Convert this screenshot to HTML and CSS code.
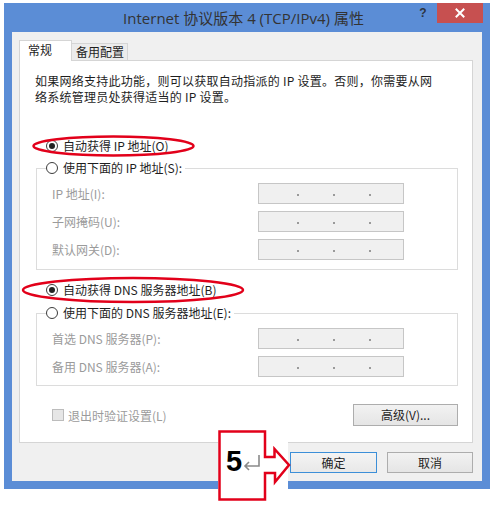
FILE: index.html
```html
<!DOCTYPE html>
<html lang="zh-CN">
<head>
<meta charset="utf-8">
<title>Internet 协议版本 4 (TCP/IPv4) 属性</title>
<link rel="stylesheet" href="styles.css">
</head>
<body>
<div class="stage">
  <div class="window">
    <div class="titlebar">
      <div class="spacer"></div>
      <div class="title">Internet 协议版本 4 (TCP/IPv4) 属性</div>
      <div class="controls">
        <span class="help">?</span>
        <span class="close"><svg width="10" height="10" viewBox="0 0 10 10"><path d="M1.5 1.5 L8.5 8.5 M8.5 1.5 L1.5 8.5" stroke="#fff" stroke-width="2" stroke-linecap="square"/></svg></span>
      </div>
    </div>
    <div class="client">
      <div class="tabs">
        <div class="tab active">常规</div>
        <div class="tab">备用配置</div>
      </div>
      <div class="panel">
        <p class="desc">如果网络支持此功能，则可以获取自动指派的 IP 设置。否则，你需要从网<br>络系统管理员处获得适当的 IP 设置。</p>
        <div class="opt"><span class="radio on"></span>自动获得 IP 地址(O)</div>
        <div class="group g1">
          <div class="opt head"><span class="radio"></span>使用下面的 IP 地址(S):</div>
          <div class="fields">
            <span class="lbl">IP 地址(I):</span>
            <span class="ip"><i></i><i></i><i></i></span>
            <span class="lbl">子网掩码(U):</span>
            <span class="ip"><i></i><i></i><i></i></span>
            <span class="lbl">默认网关(D):</span>
            <span class="ip"><i></i><i></i><i></i></span>
          </div>
        </div>
        <div class="opt o3"><span class="radio on"></span>自动获得 DNS 服务器地址(B)</div>
        <div class="group g2">
          <div class="opt head"><span class="radio"></span>使用下面的 DNS 服务器地址(E):</div>
          <div class="fields">
            <span class="lbl">首选 DNS 服务器(P):</span>
            <span class="ip"><i></i><i></i><i></i></span>
            <span class="lbl">备用 DNS 服务器(A):</span>
            <span class="ip"><i></i><i></i><i></i></span>
          </div>
        </div>
        <div class="bottom">
          <div class="check"><span class="box"></span>退出时验证设置(L)</div>
          <button class="btn adv">高级(V)...</button>
        </div>
      </div>
      <div class="actions">
        <button class="btn ok">确定</button>
        <button class="btn cancel">取消</button>
      </div>
    </div>
  </div>

  <svg class="marks" width="496" height="507" viewBox="0 0 496 507">
    <ellipse cx="113.5" cy="146" rx="80" ry="9.5" fill="none" stroke="#e2001a" stroke-width="2.5"/>
    <ellipse cx="133" cy="290" rx="110" ry="12" fill="none" stroke="#e2001a" stroke-width="2.5"/>
  </svg>

  <div class="callout">
    <svg class="callout-shape" width="76" height="72" viewBox="0 0 76 72">
      <rect x="0" y="0" width="70" height="70" fill="#fff"/>
      <path d="M1.5 1.5 H47 V27 H56.5 V19 L71 35 L57 52 V43 H47 V69.5 H1.5 Z" fill="#fff" stroke="#e2001a" stroke-width="2.5" stroke-linejoin="miter"/>
      <path d="M41 25 V36 H27 M31 32 L27 36 L31 40" fill="none" stroke="#8a8a8a" stroke-width="1.6"/>
    </svg>
    <span class="num">5</span>
  </div>
</div>
</body>
</html>
```

FILE: styles.css
```css
html, body {
  margin: 0;
  background: #fff;
}
body {
  font-family: "Noto Sans CJK SC", "Noto Sans", sans-serif;
  font-size: 12px;
  color: #1e1e1e;
}
.stage {
  position: relative;
  width: 496px;
  height: 507px;
  overflow: hidden;
}
.window {
  margin: 3px 0 0 4px;
  width: 486px;
  box-sizing: border-box;
  background: #5b8dd6;
  padding: 0 8px 8px;
}
.titlebar {
  height: 29px;
  margin: 0 -8px;
  padding-right: 7px;
  display: grid;
  grid-template-columns: 1fr auto 1fr;
}
.title {
  font-family: "Open Sans", "Noto Sans CJK SC", sans-serif;
  font-size: 15px;
  line-height: 29px;
  padding-top: 1px;
  color: #333;
  white-space: nowrap;
}
.controls {
  justify-self: end;
  display: flex;
  align-items: flex-start;
}
.help {
  width: 14px;
  margin: 3px 7px 0 0;
  text-align: center;
  font-family: "Liberation Sans", sans-serif;
  font-weight: bold;
  font-size: 12px;
  line-height: 14px;
  color: #2d3440;
}
.close {
  width: 46px;
  height: 20px;
  background: #c75050;
  display: flex;
  align-items: center;
  justify-content: center;
}
.client {
  background: #f0f0f0;
  padding: 8px 8px 8px 7px;
  display: flex;
  flex-direction: column;
}
.tabs {
  display: flex;
  align-items: flex-start;
  height: 21px;
  margin-bottom: -1px;
  position: relative;
  z-index: 1;
}
.tab {
  box-sizing: border-box;
  border: 1px solid #d5d5d5;
  border-bottom: none;
  white-space: nowrap;
}
.tab.active {
  width: 53px;
  height: 21px;
  background: #fff;
  padding-left: 8px;
  line-height: 17px;
}
.tab:not(.active) {
  width: 56px;
  height: 17px;
  margin-top: 3px;
  border-left: none;
  background: #ececec;
  padding-left: 4px;
  line-height: 16px;
}
.panel {
  box-sizing: border-box;
  width: 454px;
  height: 383px;
  background: #fff;
  border: 1px solid #d5d5d5;
  padding: 12px 14px 0 16px;
}
.desc {
  margin: 0 0 0 -1px;
  line-height: 16px;
  letter-spacing: 0.25px;
  white-space: nowrap;
}
.opt {
  display: flex;
  align-items: center;
  gap: 5px;
  height: 16px;
  line-height: 16px;
  margin-left: 10px;
  white-space: nowrap;
}
.desc + .opt {
  margin-top: 33px;
}
.radio {
  box-sizing: border-box;
  width: 12px;
  height: 12px;
  border: 1px solid #3c3c3c;
  border-radius: 50%;
  background: #fff;
  display: flex;
  align-items: center;
  justify-content: center;
}
.radio.on::after {
  content: "";
  width: 6px;
  height: 6px;
  border-radius: 50%;
  background: #222;
}
.group {
  border: 1px solid #dcdcdc;
}
.g1 {
  margin-top: 14px;
  padding-bottom: 9px;
}
.g2 {
  margin-top: 15px;
  padding-bottom: 8px;
}
.opt.head {
  margin: -9px 0 0 9px;
  width: fit-content;
  background: #fff;
  padding-right: 3px;
}
.o3 {
  margin-top: 12px;
}
.fields {
  display: grid;
  grid-template-columns: 206px 146px;
  grid-auto-rows: 21px;
  row-gap: 7px;
  align-items: center;
  padding: 7px 0 0 15px;
}
.lbl {
  color: #9b9b9b;
  white-space: nowrap;
}
.ip {
  box-sizing: border-box;
  height: 21px;
  border: 1px solid #c6c6c6;
  background: #f0f0f0;
  display: flex;
  align-items: flex-end;
  gap: 34px;
  padding: 0 0 7px 38px;
}
.ip i {
  width: 2px;
  height: 2px;
  background: #9a9a9a;
}
.bottom {
  margin-top: 18px;
  display: flex;
  justify-content: space-between;
  align-items: center;
  height: 22px;
}
.check {
  display: flex;
  align-items: center;
  gap: 4px;
  padding-left: 16px;
  color: #9b9b9b;
  white-space: nowrap;
}
.box {
  box-sizing: border-box;
  width: 12px;
  height: 12px;
  border: 1px solid #bcbcbc;
  background: #e6e6e6;
}
.btn {
  box-sizing: border-box;
  font: inherit;
  font-size: 12px;
  color: #1e1e1e;
  border: 1px solid #adadad;
  background: linear-gradient(#f2f2f2, #e5e5e5);
  padding: 0;
  line-height: 18px;
}
.adv {
  width: 105px;
  height: 22px;
}
.actions {
  margin-top: 9px;
  display: flex;
  justify-content: flex-end;
  gap: 10px;
  padding-right: 1px;
}
.ok {
  width: 87px;
  height: 21px;
  border-color: #3c8fd8;
  background: linear-gradient(#f4f4f4, #e8e8e8);
}
.cancel {
  width: 86px;
  height: 21px;
}
.marks {
  position: absolute;
  left: 0;
  top: 0;
  pointer-events: none;
}
.callout {
  position: absolute;
  left: 218px;
  top: 430px;
  width: 76px;
  height: 72px;
}
.callout-shape {
  display: block;
}
.num {
  position: absolute;
  left: 8px;
  top: 14px;
  font-family: "Liberation Sans", sans-serif;
  font-weight: bold;
  font-size: 29px;
  line-height: 34px;
  color: #000;
}
```
